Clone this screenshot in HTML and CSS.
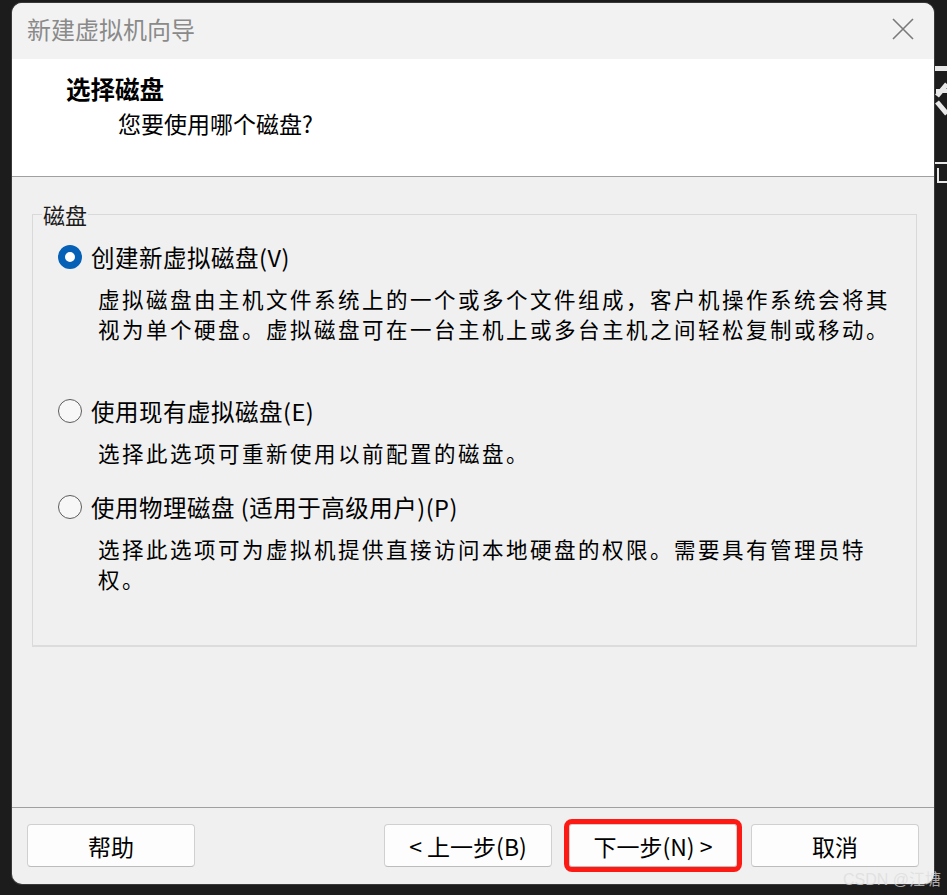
FILE: index.html
```html
<!DOCTYPE html>
<html lang="zh-CN">
<head>
<meta charset="utf-8">
<title>新建虚拟机向导</title>
<link rel="stylesheet" href="styles.css">
</head>
<body>
<svg class="backdrop" width="14" height="140" viewBox="0 0 14 140">
  <rect x="2" y="4" width="12" height="5" fill="#e8e8e8"/>
  <path d="M14 22 L4 34 M4 40 L14 52" stroke="#e8e8e8" stroke-width="5" fill="none"/>
  <rect x="3" y="27" width="11" height="4" fill="#e8e8e8"/>
  <rect x="2" y="100" width="12" height="2" fill="#e8e8e8"/>
  <path d="M5 106 L5 120 L14 120" stroke="#e8e8e8" stroke-width="2" fill="none"/>
</svg>
<div class="dialog">
  <div class="titlebar">
    <span class="title">新建虚拟机向导</span>
    <svg class="close" width="22" height="22" viewBox="0 0 22 22"><path d="M1 1 L21 21 M21 1 L1 21" stroke="#7a7a7a" stroke-width="1.6" fill="none"/></svg>
  </div>
  <div class="header">
    <div class="h-title">选择磁盘</div>
    <div class="h-sub">您要使用哪个磁盘?</div>
  </div>
  <div class="content">
    <fieldset class="group">
      <legend class="legend">磁盘</legend>
      <div class="option">
        <span class="radio checked"></span>
        <span class="opt-label">创建新虚拟磁盘(V)</span>
      </div>
      <div class="desc">虚拟磁盘由主机文件系统上的一个或多个文件组成，客户机操作系统会将其<br>视为单个硬盘。虚拟磁盘可在一台主机上或多台主机之间轻松复制或移动。</div>
      <div class="option gap-big">
        <span class="radio"></span>
        <span class="opt-label">使用现有虚拟磁盘(E)</span>
      </div>
      <div class="desc">选择此选项可重新使用以前配置的磁盘。</div>
      <div class="option gap-small">
        <span class="radio"></span>
        <span class="opt-label">使用物理磁盘 (适用于高级用户)(P)</span>
      </div>
      <div class="desc">选择此选项可为虚拟机提供直接访问本地硬盘的权限。需要具有管理员特<br>权。</div>
    </fieldset>
  </div>
  <div class="footer">
    <button class="btn">帮助</button>
    <div class="spacer"></div>
    <button class="btn">&lt; 上一步(B)</button>
    <button class="btn highlighted">下一步(N) &gt;</button>
    <button class="btn">取消</button>
  </div>
</div>
<div class="watermark">CSDN @江塘</div>
</body>
</html>
```
FILE: styles.css
```css
html, body {
  margin: 0;
  padding: 0;
  background: #1c1c1c;
  width: 947px;
  height: 895px;
  overflow: hidden;
  font-family: "Noto Sans CJK SC", "Microsoft YaHei", sans-serif;
}
body {
  position: relative;
  padding-top: 3px;
  padding-left: 12px;
  box-sizing: border-box;
}
.backdrop {
  position: absolute;
  left: 933px;
  top: 62px;
}
.dialog {
  position: relative;
  z-index: 1;
  width: 922px;
  height: 881px;
  border-radius: 10px;
  overflow: hidden;
  background: #f0f0f0;
  box-shadow: 0 0 0 1px #3a3a3a;
  display: flex;
  flex-direction: column;
}
.titlebar {
  height: 56px;
  flex: none;
  background: #f2f2f2;
  display: flex;
  align-items: center;
  padding: 0 20px 0 15px;
}
.title {
  font-size: 24px;
  color: #8a8a8a;
  flex: 1;
  margin-top: -6px;
}
.close {
  margin-top: -4px;
}
.header {
  height: 118px;
  flex: none;
  background: #ffffff;
  border-bottom: 1px solid #a0a0a0;
  box-sizing: border-box;
  padding: 14px 0 0 54px;
}
.h-title {
  font-size: 24.5px;
  font-weight: 700;
  color: #000;
  line-height: 32px;
}
.h-sub {
  font-size: 23px;
  color: #000;
  line-height: 32px;
  margin-top: 2px;
  padding-left: 52px;
}
.content {
  height: 631px;
  flex: none;
  box-sizing: border-box;
  border-bottom: 1px solid #a0a0a0;
  padding: 24px 17px 0 20px;
}
.group {
  margin: 0;
  height: 446px;
  box-sizing: border-box;
  border: 1px solid #d9d9d9;
  border-bottom: 2px solid #dcdcdc;
  padding: 14px 0 0 25px;
}
.legend {
  font-size: 22px;
  color: #1a1a1a;
  padding: 0 1px;
  margin-left: -16px;
  line-height: 26px;
}
.option {
  display: flex;
  align-items: center;
  height: 32px;
}
.gap-big { margin-top: 51px; }
.gap-small { margin-top: 23px; }
.radio {
  width: 24px;
  height: 24px;
  box-sizing: border-box;
  border: 1.5px solid #5c5c5c;
  border-radius: 50%;
  background: #f7f7f7;
  flex: none;
}
.radio.checked {
  border: 7px solid #0560b6;
  background: #ffffff;
}
.opt-label {
  font-size: 23.5px;
  color: #000;
  margin-left: 9px;
  letter-spacing: 0.5px;
}
.desc {
  font-size: 21.5px;
  color: #000;
  line-height: 30px;
  margin-top: 11px;
  padding-left: 40px;
  letter-spacing: 2.5px;
}
.footer {
  flex: 1;
  display: flex;
  align-items: flex-start;
  padding: 16px 15px 0 15px;
}
.spacer { flex: 1; }
.btn {
  width: 168px;
  height: 43px;
  box-sizing: border-box;
  background: #fdfdfd;
  border: 1px solid #d0d0d0;
  border-bottom-color: #bcbcbc;
  border-radius: 4px;
  font-family: inherit;
  font-size: 23px;
  color: #000;
  padding: 0;
  margin-left: 15px;
}
.btn:first-child { margin-left: 0; }
.btn.highlighted {
  margin-left: 17px;
  margin-right: -1px;
  outline: 5px solid #fe1a14;
  outline-offset: 0px;
  border-radius: 3px;
}
.watermark {
  position: absolute;
  z-index: 2;
  left: 843px;
  top: 866px;
  font-family: "Liberation Sans", "Noto Sans CJK SC", sans-serif;
  font-size: 16px;
  color: rgba(220, 220, 220, 0.75);
}
```
